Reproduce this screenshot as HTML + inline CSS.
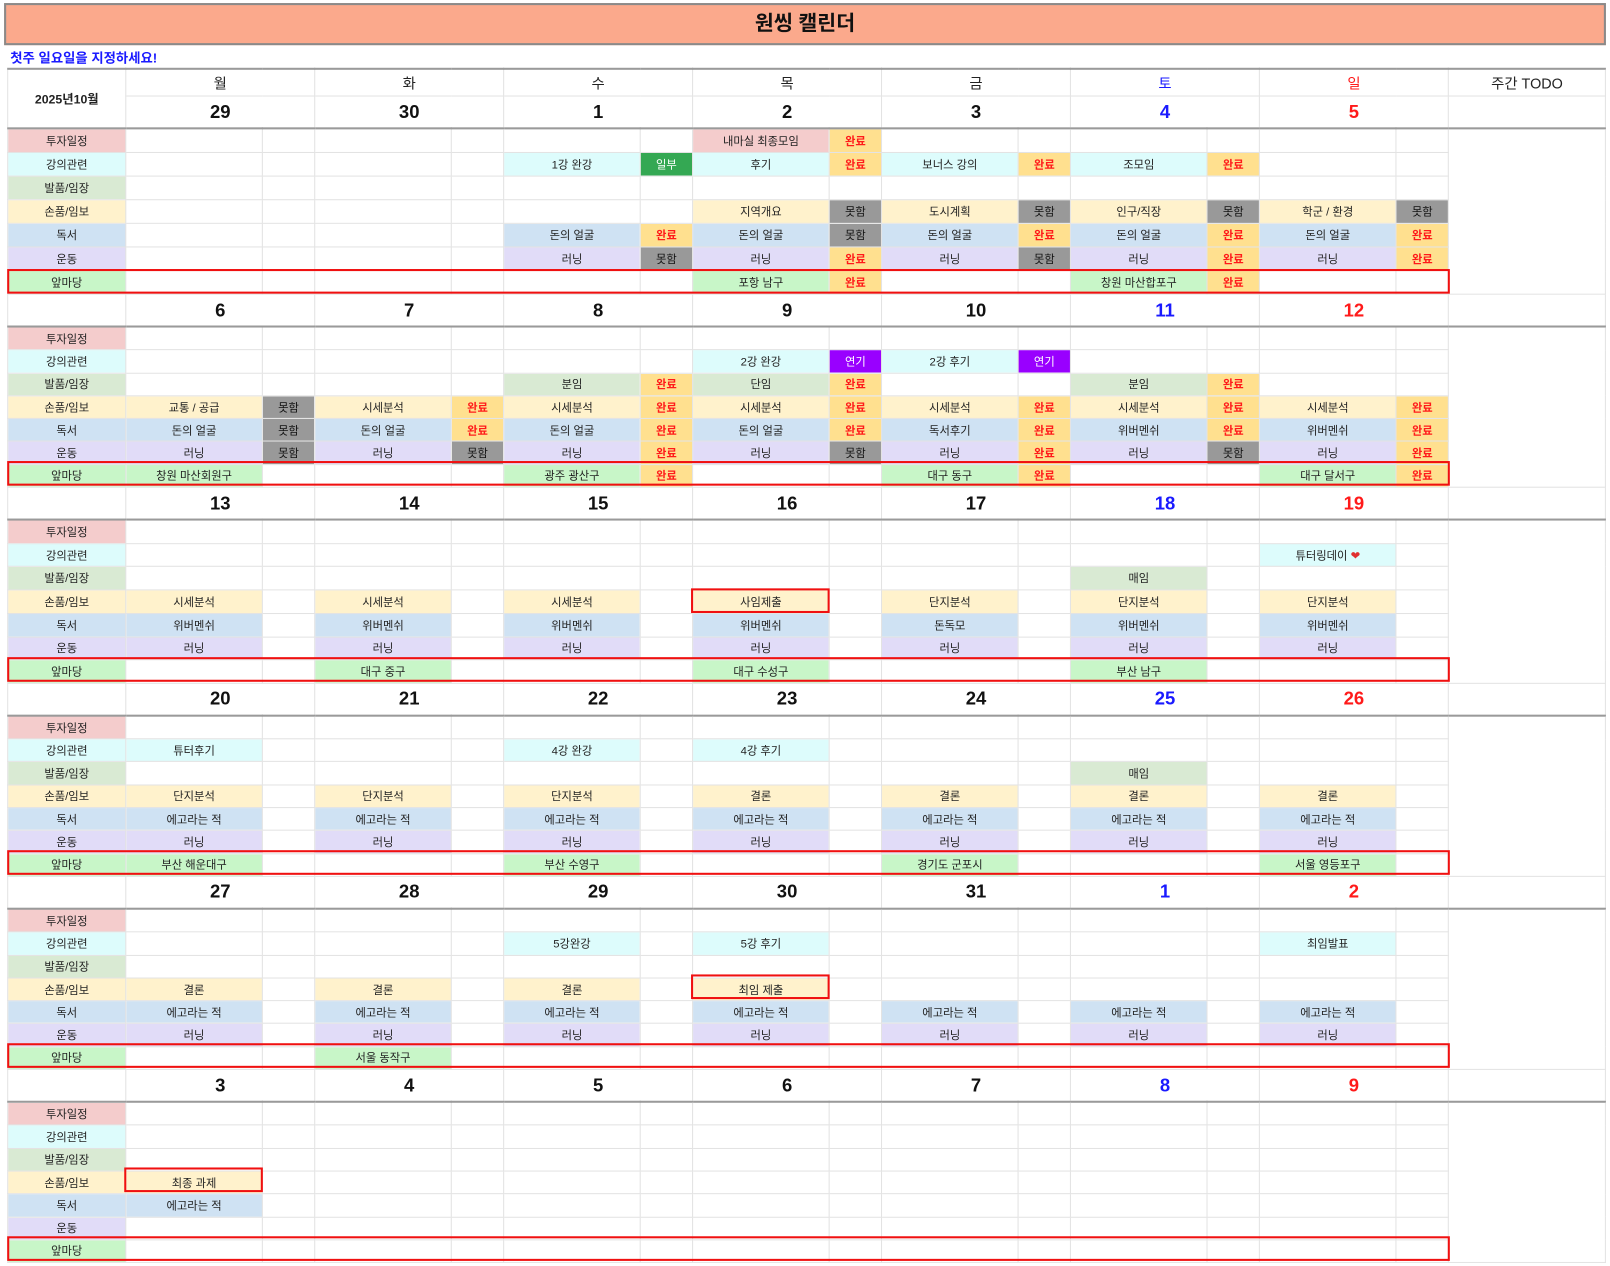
<!DOCTYPE html>
<html><head><meta charset="utf-8"><style>
body{margin:0;width:1610px;height:1266px;background:#fff;font-family:"Liberation Sans","Noto Sans CJK KR",sans-serif;position:relative;overflow:hidden}
#w{position:absolute;left:0;top:0;width:1568px;height:1233px;transform:scale(1.0268);transform-origin:0 0}
.title{position:absolute;left:4px;top:3px;width:1556px;height:37px;background:#fba98c;border:2px solid #8a8a8a;text-align:center;font-size:20px;font-weight:bold;line-height:37px;color:#111}
.sub{position:absolute;left:10px;top:46px;font-size:13px;font-weight:bold;color:#1a1aff}
table{position:absolute;left:7px;top:66px;border-collapse:collapse;table-layout:fixed;width:1556px}
td{border:1px solid #e3e3e3;padding:0;text-align:center;font-size:11px;color:#222;white-space:nowrap;overflow:hidden}
tr.wd td{height:25px;font-size:14px}
tr.dt td{height:30px;font-size:18px;font-weight:bold;color:#111;border-bottom:2px solid #9a9a9a}
tr.h1 td{height:22px}
tr.h2 td{height:21.3px}
tr.h3 td{height:21.7px}
table{border-top:2px solid #9a9a9a;border-left:1px solid #bbb}
tr td.sa{color:#1a1aff}tr td.su{color:#ff1a1a}
.p{background:#f4cccc}.c{background:#ddfcfc}.g{background:#d9ead3}.y{background:#fff2cc}.b{background:#cfe2f3}.v{background:#e1dcf8}.a{background:#c8f6c8}
.ok{background:#ffe08f;color:#ff1a1a;font-weight:bold}
.no{background:#999;color:#111}
.il{background:#34a853;color:#fff}
.yg{background:#9900ff;color:#fff}
.rb{position:absolute;border:2.5px solid #f01010;box-sizing:border-box}
</style></head><body><div id="w">
<div class="title">원씽 캘린더</div>
<div class="sub">첫주 일요일을 지정하세요!</div>
<table>
<colgroup><col style="width:115px"><col style="width:133px"><col style="width:51px"><col style="width:133px"><col style="width:51px"><col style="width:133px"><col style="width:51px"><col style="width:133px"><col style="width:51px"><col style="width:133px"><col style="width:51px"><col style="width:133px"><col style="width:51px"><col style="width:133px"><col style="width:51px"><col style="width:153px"></colgroup>
<tr class="wd"><td rowspan="2" style="font-weight:bold;font-size:12px;border-bottom:2px solid #9a9a9a">2025년10월</td><td colspan="2">월</td><td colspan="2">화</td><td colspan="2">수</td><td colspan="2">목</td><td colspan="2">금</td><td colspan="2" class="sa">토</td><td colspan="2" class="su">일</td><td>주간 TODO</td></tr>
<tr class="dt"><td colspan="2">29</td><td colspan="2">30</td><td colspan="2">1</td><td colspan="2">2</td><td colspan="2">3</td><td colspan="2" class="sa">4</td><td colspan="2" class="su">5</td><td></td></tr>
<tr class="h1"><td class="p">투자일정</td><td></td><td></td><td></td><td></td><td></td><td></td><td class="p">내마실 최종모임</td><td class="ok">완료</td><td></td><td></td><td></td><td></td><td></td><td></td><td rowspan="7"></td></tr>
<tr class="h1"><td class="c">강의관련</td><td></td><td></td><td></td><td></td><td class="c">1강 완강</td><td class="il">일부</td><td class="c">후기</td><td class="ok">완료</td><td class="c">보너스 강의</td><td class="ok">완료</td><td class="c">조모임</td><td class="ok">완료</td><td></td><td></td></tr>
<tr class="h1"><td class="g">발품/임장</td><td></td><td></td><td></td><td></td><td></td><td></td><td></td><td></td><td></td><td></td><td></td><td></td><td></td><td></td></tr>
<tr class="h1"><td class="y">손품/임보</td><td></td><td></td><td></td><td></td><td></td><td></td><td class="y">지역개요</td><td class="no">못함</td><td class="y">도시계획</td><td class="no">못함</td><td class="y">인구/직장</td><td class="no">못함</td><td class="y">학군 / 환경</td><td class="no">못함</td></tr>
<tr class="h1"><td class="b">독서</td><td></td><td></td><td></td><td></td><td class="b">돈의 얼굴</td><td class="ok">완료</td><td class="b">돈의 얼굴</td><td class="no">못함</td><td class="b">돈의 얼굴</td><td class="ok">완료</td><td class="b">돈의 얼굴</td><td class="ok">완료</td><td class="b">돈의 얼굴</td><td class="ok">완료</td></tr>
<tr class="h1"><td class="v">운동</td><td></td><td></td><td></td><td></td><td class="v">러닝</td><td class="no">못함</td><td class="v">러닝</td><td class="ok">완료</td><td class="v">러닝</td><td class="no">못함</td><td class="v">러닝</td><td class="ok">완료</td><td class="v">러닝</td><td class="ok">완료</td></tr>
<tr class="h1"><td class="a">앞마당</td><td></td><td></td><td></td><td></td><td></td><td></td><td class="a">포항 남구</td><td class="ok">완료</td><td></td><td></td><td class="a">창원 마산합포구</td><td class="ok">완료</td><td></td><td></td></tr>

<tr class="dt"><td></td><td colspan="2">6</td><td colspan="2">7</td><td colspan="2">8</td><td colspan="2">9</td><td colspan="2">10</td><td colspan="2" class="sa">11</td><td colspan="2" class="su">12</td><td></td></tr>
<tr class="h2"><td class="p">투자일정</td><td></td><td></td><td></td><td></td><td></td><td></td><td></td><td></td><td></td><td></td><td></td><td></td><td></td><td></td><td rowspan="7"></td></tr>
<tr class="h2"><td class="c">강의관련</td><td></td><td></td><td></td><td></td><td></td><td></td><td class="c">2강 완강</td><td class="yg">연기</td><td class="c">2강 후기</td><td class="yg">연기</td><td></td><td></td><td></td><td></td></tr>
<tr class="h2"><td class="g">발품/임장</td><td></td><td></td><td></td><td></td><td class="g">분임</td><td class="ok">완료</td><td class="g">단임</td><td class="ok">완료</td><td></td><td></td><td class="g">분임</td><td class="ok">완료</td><td></td><td></td></tr>
<tr class="h2"><td class="y">손품/임보</td><td class="y">교통 / 공급</td><td class="no">못함</td><td class="y">시세분석</td><td class="ok">완료</td><td class="y">시세분석</td><td class="ok">완료</td><td class="y">시세분석</td><td class="ok">완료</td><td class="y">시세분석</td><td class="ok">완료</td><td class="y">시세분석</td><td class="ok">완료</td><td class="y">시세분석</td><td class="ok">완료</td></tr>
<tr class="h2"><td class="b">독서</td><td class="b">돈의 얼굴</td><td class="no">못함</td><td class="b">돈의 얼굴</td><td class="ok">완료</td><td class="b">돈의 얼굴</td><td class="ok">완료</td><td class="b">돈의 얼굴</td><td class="ok">완료</td><td class="b">독서후기</td><td class="ok">완료</td><td class="b">위버멘쉬</td><td class="ok">완료</td><td class="b">위버멘쉬</td><td class="ok">완료</td></tr>
<tr class="h2"><td class="v">운동</td><td class="v">러닝</td><td class="no">못함</td><td class="v">러닝</td><td class="no">못함</td><td class="v">러닝</td><td class="ok">완료</td><td class="v">러닝</td><td class="no">못함</td><td class="v">러닝</td><td class="ok">완료</td><td class="v">러닝</td><td class="no">못함</td><td class="v">러닝</td><td class="ok">완료</td></tr>
<tr class="h2"><td class="a">앞마당</td><td class="a">창원 마산회원구</td><td></td><td></td><td></td><td class="a">광주 광산구</td><td class="ok">완료</td><td></td><td></td><td class="a">대구 동구</td><td class="ok">완료</td><td></td><td></td><td class="a">대구 달서구</td><td class="ok">완료</td></tr>

<tr class="dt"><td></td><td colspan="2">13</td><td colspan="2">14</td><td colspan="2">15</td><td colspan="2">16</td><td colspan="2">17</td><td colspan="2" class="sa">18</td><td colspan="2" class="su">19</td><td></td></tr>
<tr class="h3"><td class="p">투자일정</td><td></td><td></td><td></td><td></td><td></td><td></td><td></td><td></td><td></td><td></td><td></td><td></td><td></td><td></td><td rowspan="7"></td></tr>
<tr class="h3"><td class="c">강의관련</td><td></td><td></td><td></td><td></td><td></td><td></td><td></td><td></td><td></td><td></td><td></td><td></td><td class="c">튜터링데이 <span style="color:#e03030">❤</span></td><td></td></tr>
<tr class="h3"><td class="g">발품/임장</td><td></td><td></td><td></td><td></td><td></td><td></td><td></td><td></td><td></td><td></td><td class="g">매임</td><td></td><td></td><td></td></tr>
<tr class="h3"><td class="y">손품/임보</td><td class="y">시세분석</td><td></td><td class="y">시세분석</td><td></td><td class="y">시세분석</td><td></td><td class="y">사임제출</td><td></td><td class="y">단지분석</td><td></td><td class="y">단지분석</td><td></td><td class="y">단지분석</td><td></td></tr>
<tr class="h3"><td class="b">독서</td><td class="b">위버멘쉬</td><td></td><td class="b">위버멘쉬</td><td></td><td class="b">위버멘쉬</td><td></td><td class="b">위버멘쉬</td><td></td><td class="b">돈독모</td><td></td><td class="b">위버멘쉬</td><td></td><td class="b">위버멘쉬</td><td></td></tr>
<tr class="h3"><td class="v">운동</td><td class="v">러닝</td><td></td><td class="v">러닝</td><td></td><td class="v">러닝</td><td></td><td class="v">러닝</td><td></td><td class="v">러닝</td><td></td><td class="v">러닝</td><td></td><td class="v">러닝</td><td></td></tr>
<tr class="h3"><td class="a">앞마당</td><td></td><td></td><td class="a">대구 중구</td><td></td><td></td><td></td><td class="a">대구 수성구</td><td></td><td></td><td></td><td class="a">부산 남구</td><td></td><td></td><td></td></tr>

<tr class="dt"><td></td><td colspan="2">20</td><td colspan="2">21</td><td colspan="2">22</td><td colspan="2">23</td><td colspan="2">24</td><td colspan="2" class="sa">25</td><td colspan="2" class="su">26</td><td></td></tr>
<tr class="h2"><td class="p">투자일정</td><td></td><td></td><td></td><td></td><td></td><td></td><td></td><td></td><td></td><td></td><td></td><td></td><td></td><td></td><td rowspan="7"></td></tr>
<tr class="h2"><td class="c">강의관련</td><td class="c">튜터후기</td><td></td><td></td><td></td><td class="c">4강 완강</td><td></td><td class="c">4강 후기</td><td></td><td></td><td></td><td></td><td></td><td></td><td></td></tr>
<tr class="h2"><td class="g">발품/임장</td><td></td><td></td><td></td><td></td><td></td><td></td><td></td><td></td><td></td><td></td><td class="g">매임</td><td></td><td></td><td></td></tr>
<tr class="h2"><td class="y">손품/임보</td><td class="y">단지분석</td><td></td><td class="y">단지분석</td><td></td><td class="y">단지분석</td><td></td><td class="y">결론</td><td></td><td class="y">결론</td><td></td><td class="y">결론</td><td></td><td class="y">결론</td><td></td></tr>
<tr class="h2"><td class="b">독서</td><td class="b">에고라는 적</td><td></td><td class="b">에고라는 적</td><td></td><td class="b">에고라는 적</td><td></td><td class="b">에고라는 적</td><td></td><td class="b">에고라는 적</td><td></td><td class="b">에고라는 적</td><td></td><td class="b">에고라는 적</td><td></td></tr>
<tr class="h2"><td class="v">운동</td><td class="v">러닝</td><td></td><td class="v">러닝</td><td></td><td class="v">러닝</td><td></td><td class="v">러닝</td><td></td><td class="v">러닝</td><td></td><td class="v">러닝</td><td></td><td class="v">러닝</td><td></td></tr>
<tr class="h2"><td class="a">앞마당</td><td class="a">부산 해운대구</td><td></td><td></td><td></td><td class="a">부산 수영구</td><td></td><td></td><td></td><td class="a">경기도 군포시</td><td></td><td></td><td></td><td class="a">서울 영등포구</td><td></td></tr>

<tr class="dt"><td></td><td colspan="2">27</td><td colspan="2">28</td><td colspan="2">29</td><td colspan="2">30</td><td colspan="2">31</td><td colspan="2" class="sa">1</td><td colspan="2" class="su">2</td><td></td></tr>
<tr class="h2"><td class="p">투자일정</td><td></td><td></td><td></td><td></td><td></td><td></td><td></td><td></td><td></td><td></td><td></td><td></td><td></td><td></td><td rowspan="7"></td></tr>
<tr class="h2"><td class="c">강의관련</td><td></td><td></td><td></td><td></td><td class="c">5강완강</td><td></td><td class="c">5강 후기</td><td></td><td></td><td></td><td></td><td></td><td class="c">최임발표</td><td></td></tr>
<tr class="h2"><td class="g">발품/임장</td><td></td><td></td><td></td><td></td><td></td><td></td><td></td><td></td><td></td><td></td><td></td><td></td><td></td><td></td></tr>
<tr class="h2"><td class="y">손품/임보</td><td class="y">결론</td><td></td><td class="y">결론</td><td></td><td class="y">결론</td><td></td><td class="y">최임 제출</td><td></td><td></td><td></td><td></td><td></td><td></td><td></td></tr>
<tr class="h2"><td class="b">독서</td><td class="b">에고라는 적</td><td></td><td class="b">에고라는 적</td><td></td><td class="b">에고라는 적</td><td></td><td class="b">에고라는 적</td><td></td><td class="b">에고라는 적</td><td></td><td class="b">에고라는 적</td><td></td><td class="b">에고라는 적</td><td></td></tr>
<tr class="h2"><td class="v">운동</td><td class="v">러닝</td><td></td><td class="v">러닝</td><td></td><td class="v">러닝</td><td></td><td class="v">러닝</td><td></td><td class="v">러닝</td><td></td><td class="v">러닝</td><td></td><td class="v">러닝</td><td></td></tr>
<tr class="h2"><td class="a">앞마당</td><td></td><td></td><td class="a">서울 동작구</td><td></td><td></td><td></td><td></td><td></td><td></td><td></td><td></td><td></td><td></td><td></td></tr>

<tr class="dt"><td></td><td colspan="2">3</td><td colspan="2">4</td><td colspan="2">5</td><td colspan="2">6</td><td colspan="2">7</td><td colspan="2" class="sa">8</td><td colspan="2" class="su">9</td><td></td></tr>
<tr class="h2"><td class="p">투자일정</td><td></td><td></td><td></td><td></td><td></td><td></td><td></td><td></td><td></td><td></td><td></td><td></td><td></td><td></td><td rowspan="7"></td></tr>
<tr class="h2"><td class="c">강의관련</td><td></td><td></td><td></td><td></td><td></td><td></td><td></td><td></td><td></td><td></td><td></td><td></td><td></td><td></td></tr>
<tr class="h2"><td class="g">발품/임장</td><td></td><td></td><td></td><td></td><td></td><td></td><td></td><td></td><td></td><td></td><td></td><td></td><td></td><td></td></tr>
<tr class="h2"><td class="y">손품/임보</td><td class="y">최종 과제</td><td></td><td></td><td></td><td></td><td></td><td></td><td></td><td></td><td></td><td></td><td></td><td></td><td></td></tr>
<tr class="h2"><td class="b">독서</td><td class="b">에고라는 적</td><td></td><td></td><td></td><td></td><td></td><td></td><td></td><td></td><td></td><td></td><td></td><td></td><td></td></tr>
<tr class="h2"><td class="v">운동</td><td></td><td></td><td></td><td></td><td></td><td></td><td></td><td></td><td></td><td></td><td></td><td></td><td></td><td></td></tr>
<tr class="h2"><td class="a">앞마당</td><td></td><td></td><td></td><td></td><td></td><td></td><td></td><td></td><td></td><td></td><td></td><td></td><td></td><td></td></tr>
</table>
<div class="rb" style="left:7px;top:262px;width:1405px;height:24px"></div>
<div class="rb" style="left:7px;top:449px;width:1405px;height:24px"></div>
<div class="rb" style="left:7px;top:640px;width:1405px;height:24px"></div>
<div class="rb" style="left:7px;top:828px;width:1405px;height:24px"></div>
<div class="rb" style="left:7px;top:1016px;width:1405px;height:24px"></div>
<div class="rb" style="left:7px;top:1204px;width:1405px;height:24px"></div>
<div class="rb" style="left:673px;top:573px;width:135px;height:24px"></div>
<div class="rb" style="left:673px;top:949px;width:135px;height:24px"></div>
<div class="rb" style="left:121px;top:1137px;width:135px;height:24px"></div>
</div></body></html>
